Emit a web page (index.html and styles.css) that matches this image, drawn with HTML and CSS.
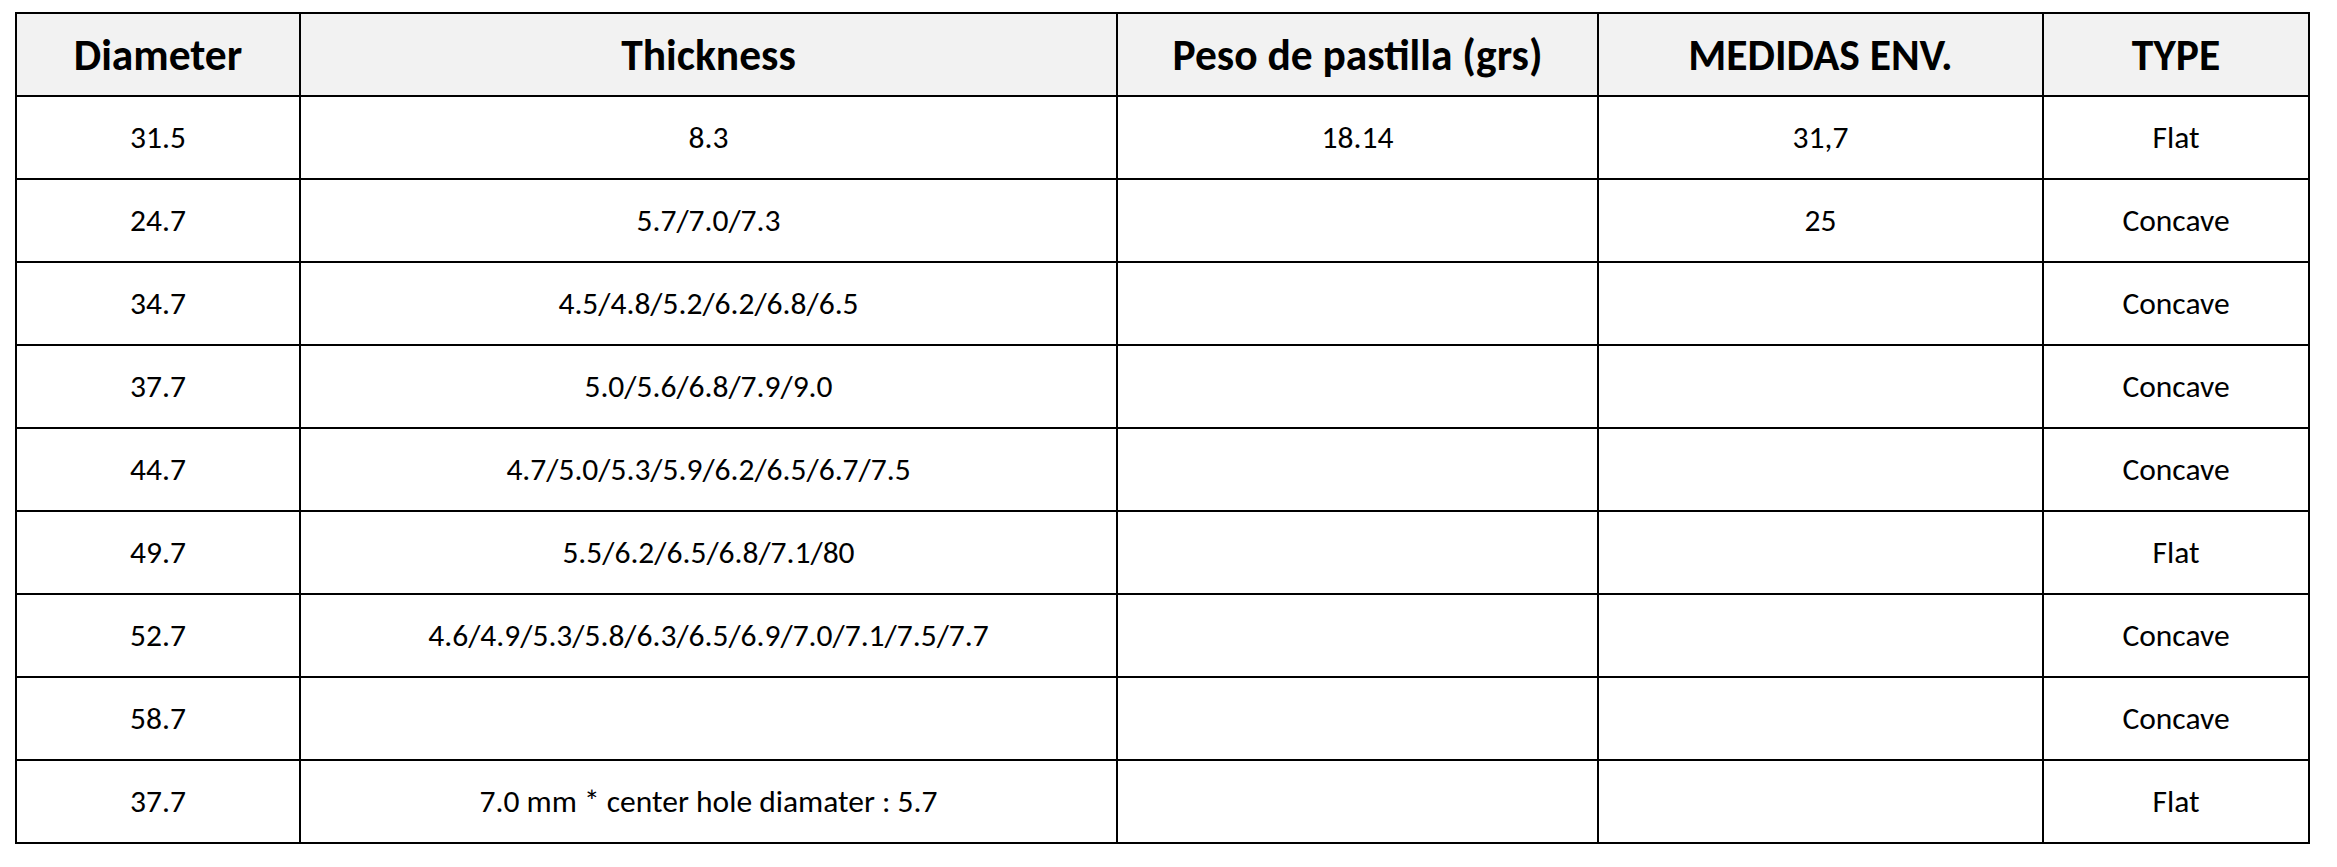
FILE: index.html
```html
<!DOCTYPE html>
<html>
<head>
<meta charset="utf-8">
<link rel="stylesheet" href="styles.css">
</head>
<body>
<div class="wrap">
<table class="spec">
  <colgroup>
    <col class="c1"><col class="c2"><col class="c3"><col class="c4"><col class="c5">
  </colgroup>
  <thead>
    <tr><th>Diameter</th><th>Thickness</th><th>Peso de pastilla (grs)</th><th>MEDIDAS ENV.</th><th>TYPE</th></tr>
  </thead>
  <tbody>
    <tr><td>31.5</td><td>8.3</td><td>18.14</td><td>31,7</td><td>Flat</td></tr>
    <tr><td>24.7</td><td>5.7/7.0/7.3</td><td></td><td>25</td><td>Concave</td></tr>
    <tr><td>34.7</td><td>4.5/4.8/5.2/6.2/6.8/6.5</td><td></td><td></td><td>Concave</td></tr>
    <tr><td>37.7</td><td>5.0/5.6/6.8/7.9/9.0</td><td></td><td></td><td>Concave</td></tr>
    <tr><td>44.7</td><td>4.7/5.0/5.3/5.9/6.2/6.5/6.7/7.5</td><td></td><td></td><td>Concave</td></tr>
    <tr><td>49.7</td><td>5.5/6.2/6.5/6.8/7.1/80</td><td></td><td></td><td>Flat</td></tr>
    <tr><td>52.7</td><td>4.6/4.9/5.3/5.8/6.3/6.5/6.9/7.0/7.1/7.5/7.7</td><td></td><td></td><td>Concave</td></tr>
    <tr><td>58.7</td><td></td><td></td><td></td><td>Concave</td></tr>
    <tr><td>37.7</td><td>7.0 mm * center hole diamater : 5.7</td><td></td><td></td><td>Flat</td></tr>
  </tbody>
</table>
</div>
</body>
</html>
```
FILE: styles.css
```css
html, body {
  margin: 0;
  padding: 0;
  background: #ffffff;
}
.wrap {
  padding: 12px 0 0 15px;
}
.spec {
  border-collapse: collapse;
  table-layout: fixed;
  width: 2293px;
  font-family: Carlito, Calibri, Lato, "Liberation Sans", sans-serif;
  color: #000;
}
.c1 { width: 284px; }
.c2 { width: 817px; }
.c3 { width: 481px; }
.c4 { width: 445px; }
.c5 { width: 266px; }
.spec th, .spec td {
  border: 2px solid #000;
  height: 83px;
  padding: 0;
  text-align: center;
  vertical-align: middle;
  box-sizing: border-box;
}
.spec th {
  background: #f2f2f2;
  font-weight: 700;
  font-size: 43.5px;
  padding-top: 2px;
}
.spec td {
  font-size: 31.5px;
  font-weight: 400;
  padding-bottom: 2px;
}
```
